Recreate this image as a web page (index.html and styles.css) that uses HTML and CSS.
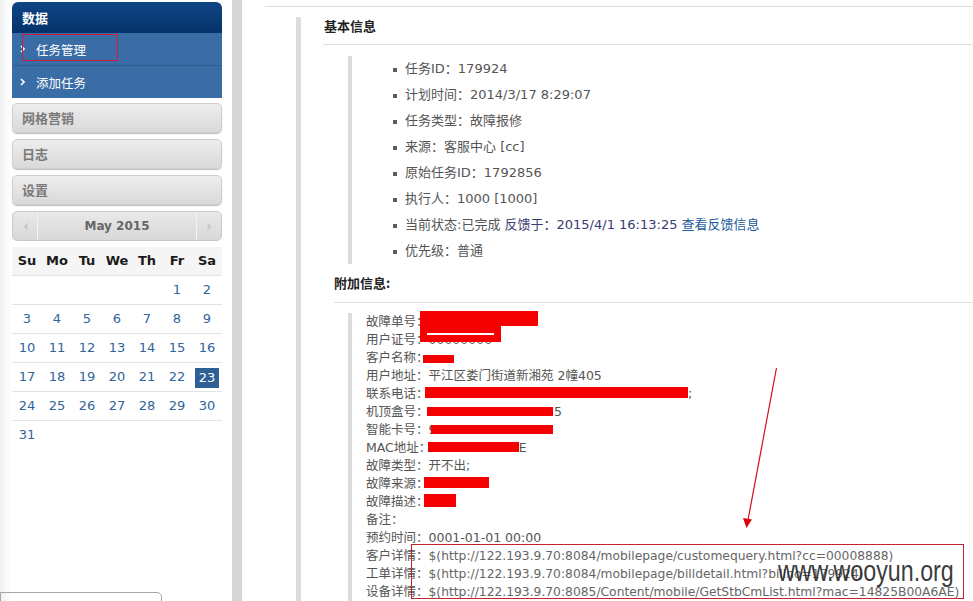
FILE: index.html
```html
<!DOCTYPE html>
<html lang="zh-CN">
<head>
<meta charset="utf-8">
<title>任务详情</title>
<link rel="stylesheet" href="styles.css">
</head>
<body>
<div class="page">
  <aside class="sidebar">
    <nav class="acc">
      <div class="acc-head">数据</div>
      <a class="acc-item"><svg class="chev" width="5" height="8" viewBox="0 0 5 8"><polyline points="1,1 4,4 1,7" fill="none" stroke="#fff" stroke-width="1.6"/></svg><span>任务管理</span><span class="annot-box"></span></a>
      <a class="acc-item"><svg class="chev" width="5" height="8" viewBox="0 0 5 8"><polyline points="1,1 4,4 1,7" fill="none" stroke="#fff" stroke-width="1.6"/></svg><span>添加任务</span></a>
    </nav>
    <div class="acc-btn first">网格营销</div>
    <div class="acc-btn">日志</div>
    <div class="acc-btn">设置</div>

    <div class="cal">
      <div class="cal-head">
        <span class="cal-nav prev"><svg width="5" height="9" viewBox="0 0 5 9"><polygon points="4.5,0 0.5,4.5 4.5,9" fill="#c9c9c9"/></svg></span>
        <span class="cal-title">May 2015</span>
        <span class="cal-nav next"><svg width="5" height="9" viewBox="0 0 5 9"><polygon points="0.5,0 4.5,4.5 0.5,9" fill="#c9c9c9"/></svg></span>
      </div>
      <table class="cal-grid">
        <thead>
          <tr><th>Su</th><th>Mo</th><th>Tu</th><th>We</th><th>Th</th><th>Fr</th><th>Sa</th></tr>
        </thead>
        <tbody>
          <tr><td></td><td></td><td></td><td></td><td></td><td>1</td><td>2</td></tr>
          <tr><td>3</td><td>4</td><td>5</td><td>6</td><td>7</td><td>8</td><td>9</td></tr>
          <tr><td>10</td><td>11</td><td>12</td><td>13</td><td>14</td><td>15</td><td>16</td></tr>
          <tr><td>17</td><td>18</td><td>19</td><td>20</td><td>21</td><td>22</td><td><span class="today">23</span></td></tr>
          <tr><td>24</td><td>25</td><td>26</td><td>27</td><td>28</td><td>29</td><td>30</td></tr>
          <tr class="last"><td>31</td><td></td><td></td><td></td><td></td><td></td><td></td></tr>
        </tbody>
      </table>
    </div>
    <div class="stub"></div>
  </aside>

  <div class="gutter"></div>

  <main class="main">
    <div class="topline"></div>
    <section class="detail">
      <h3 class="sec-title">基本信息</h3>
      <ul class="info-list">
        <li>任务ID：179924</li>
        <li>计划时间：2014/3/17 8:29:07</li>
        <li>任务类型：故障报修</li>
        <li>来源：客服中心 [cc]</li>
        <li>原始任务ID：1792856</li>
        <li>执行人：1000 [1000]</li>
        <li>当前状态:已完成 <span class="fb">反馈于：2015/4/1 16:13:25</span> <a class="link">查看反馈信息</a></li>
        <li>优先级：普通</li>
      </ul>

      <h4 class="sec-sub">附加信息:</h4>
      <div class="extra">
        <div class="row">故障单号：<span class="red r-order"></span></div>
        <div class="row">用户证号：<span class="red r-user"></span>00000000</div>
        <div class="row">客户名称：<span class="red r-name"></span></div>
        <div class="row">用户地址：平江区娄门街道新湘苑 2幢405</div>
        <div class="row">联系电话：<span class="red r-phone"></span>;</div>
        <div class="row">机顶盒号：<span class="red r-stb"></span><span class="tail">5</span></div>
        <div class="row">智能卡号：9<span class="red r-card"></span></div>
        <div class="row">MAC地址：<span class="red r-mac"></span>E</div>
        <div class="row">故障类型：开不出;</div>
        <div class="row">故障来源：<span class="red r-src"></span></div>
        <div class="row">故障描述：<span class="red r-desc"></span></div>
        <div class="row">备注：</div>
        <div class="row">预约时间：0001-01-01 00:00</div>
        <div class="row">客户详情：<span class="url">$(http://122.193.9.70:8084/mobilepage/customequery.html?cc=00008888)</span></div>
        <div class="row">工单详情：<span class="url">$(http://122.193.9.70:8084/mobilepage/billdetail.html?billno=179924)</span></div>
        <div class="row">设备详情：<span class="url">$(http://122.193.9.70:8085/Content/mobile/GetStbCmList.html?mac=14825B00A6AE)</span></div>

        <div class="url-box"></div>
        <svg class="arrow" width="40" height="165" viewBox="0 0 40 165">
          <line x1="36.5" y1="0" x2="8" y2="152" stroke="#d40f1c" stroke-width="1.2"/>
          <polygon points="6.5,160 3,150 12,151.5" fill="#e00010"/>
        </svg>
        <div class="wm">www.wooyun.org</div>
      </div>
    </section>
  </main>
</div>
</body>
</html>
```

FILE: styles.css
```css
html, body {
  margin: 0;
  padding: 0;
  height: 601px;
  overflow: hidden;
  background: #fff;
}

body {
  font-family: "DejaVu Sans", "Noto Sans CJK SC", sans-serif;
  color: #555;
}

.page {
  display: flex;
  height: 601px;
}

/* ---------- sidebar ---------- */
.sidebar {
  width: 232px;
  flex: none;
  box-sizing: border-box;
  padding: 2px 10px 0 12px;
  background: linear-gradient(to right, #f0f0f0 0, #fff 11px);
}

.acc-head {
  height: 31px;
  line-height: 31px;
  padding-left: 10px;
  border-radius: 6px 6px 0 0;
  background: linear-gradient(#0f4584, #05336b);
  color: #fff;
  font-family: "Noto Sans CJK SC", sans-serif;
  font-size: 13px;
  font-weight: bold;
}

.acc-item {
  position: relative;
  display: flex;
  align-items: center;
  height: 32px;
  padding-left: 8px;
  background: #3a6ca6;
  color: #fff;
  font-family: "Noto Sans CJK SC", sans-serif;
  font-size: 12.5px;
}

.acc-item + .acc-item {
  border-top: 1px solid #2f5e95;
}

.chev {
  flex: none;
  margin-right: 11px;
}

.annot-box {
  position: absolute;
  left: 10px;
  top: 1px;
  width: 96px;
  height: 27px;
  box-sizing: border-box;
  border: 1px solid #cc1b3d;
}

.acc-btn {
  margin-top: 6px;
  height: 30px;
  box-sizing: border-box;
  padding-left: 9px;
  line-height: 28px;
  border: 1px solid #cfcfcf;
  border-radius: 5px;
  background: linear-gradient(#ededed, #d9d9d9);
  box-shadow: 0 1px 1px #bcbcbc;
  color: #7a7a7a;
  font-family: "Noto Sans CJK SC", sans-serif;
  font-size: 13px;
  font-weight: bold;
}

.acc-btn.first {
  margin-top: 5px;
}

/* ---------- calendar ---------- */
.cal {
  margin-top: 6px;
}

.cal-head {
  display: flex;
  height: 30px;
  box-sizing: border-box;
  border: 1px solid #c9c9c9;
  border-radius: 5px;
  background: linear-gradient(#e9e9e9, #d8d8d8);
}

.cal-nav {
  width: 24px;
  display: flex;
  align-items: center;
  justify-content: center;
}

.cal-nav.prev {
  border-right: 1px solid #f3f3f3;
}

.cal-nav.next {
  border-left: 1px solid #f3f3f3;
}

.cal-title {
  flex: 1;
  text-align: center;
  line-height: 28px;
  font-size: 12px;
  font-weight: bold;
  color: #666;
}

.cal-grid {
  margin-top: 6px;
  width: 210px;
  table-layout: fixed;
  border-collapse: separate;
  border-spacing: 0;
  font-size: 13px;
}

.cal-grid th,
.cal-grid td {
  padding: 0;
  text-align: center;
  line-height: 28px;
  border-bottom: 1px solid #e3e3e3;
}

.cal-grid th {
  background: #f5f5f5;
  color: #1a1a1a;
  font-weight: bold;
}

.cal-grid td {
  color: #2f659b;
}

.cal-grid tr.last td {
  border-bottom: none;
}

.today {
  display: inline-block;
  width: 24px;
  height: 20px;
  line-height: 20px;
  background: #2d6097;
  color: #fff;
  vertical-align: middle;
}

.stub {
  margin: 143px 0 0 -12px;
  width: 162px;
  height: 30px;
  box-sizing: border-box;
  border: 1px solid #a5a5a5;
  border-radius: 0 5px 0 0;
}

/* ---------- gutter ---------- */
.gutter {
  width: 10px;
  flex: none;
  background: #d6d6d6;
}

/* ---------- main ---------- */
.main {
  flex: 1;
  min-width: 0;
  padding-left: 20px;
  display: flex;
  flex-direction: column;
}

.topline {
  flex: none;
  height: 1px;
  margin-top: 6px;
  background: linear-gradient(to right, #fff, #dcdcdc 6px);
}

.detail {
  flex: 1;
  margin: 10px 0 0 34px;
  padding-left: 22px;
  border-left: 5px solid #dcdcdc;
}

.sec-title {
  margin: 0;
  padding: 0 0 9px 1px;
  line-height: 18px;
  border-bottom: 1px solid #dedede;
  font-family: "Noto Sans CJK SC", sans-serif;
  font-size: 13px;
  font-weight: bold;
  color: #222;
}

.info-list {
  list-style: none;
  margin: 11px 0 0 25px;
  padding: 0 0 0 41px;
  border-left: 4px solid #dcdcdc;
  font-size: 13px;
  color: #555;
}

.info-list li {
  line-height: 26px;
  white-space: nowrap;
}

.info-list li::before {
  content: "";
  display: inline-block;
  width: 4px;
  height: 4px;
  margin-right: 8px;
  background: #5a5a5a;
  vertical-align: middle;
}

.fb {
  color: #3b3b72;
}

.link {
  color: #1d5c9b;
}

.sec-sub {
  margin: 10px 0 0 11px;
  padding-bottom: 10px;
  line-height: 18px;
  border-bottom: 1px solid #dedede;
  font-family: "Noto Sans CJK SC", sans-serif;
  font-size: 13px;
  font-weight: bold;
  color: #222;
}

.extra {
  position: relative;
  margin: 10px 0 0 25px;
  padding-left: 14px;
  border-left: 4px solid #dcdcdc;
  font-size: 12.5px;
  line-height: 18px;
  color: #555;
  min-height: 300px;
}

.row {
  height: 18px;
  white-space: nowrap;
}

.url {
  color: #666;
  font-size: 12.3px;
}

.red {
  display: inline-block;
  position: relative;
  z-index: 1;
  background: #f50000;
}

.r-order { width: 118px; height: 15px; margin-left: -8.5px; margin-top: -4px; vertical-align: 0; }
.r-user  { width: 81px;  height: 17px; margin-left: -8.5px; margin-right: -72.5px; margin-top: -9px; vertical-align: 2px; }
.r-user::after {
  content: "";
  position: absolute;
  left: 7px;
  top: 8px;
  width: 67px;
  height: 2px;
  background: #fff;
}
.r-name  { width: 31px;  height: 8px;  margin-left: -5.5px; vertical-align: -1px; }
.r-phone { width: 263px; height: 11px; margin-left: -3.5px; vertical-align: 0; }
.r-stb   { width: 126px; height: 9px;  margin-left: -1.5px; vertical-align: 0; }
.tail    { margin-left: 1px; }
.r-card  { width: 122px; height: 9px;  margin-left: -5.5px; vertical-align: 0; }
.r-mac   { width: 91px;  height: 10px; margin-left: -3.5px; vertical-align: 0; }
.r-src   { width: 65px;  height: 11px; margin-left: -4.5px; vertical-align: 0; }
.r-desc  { width: 32px;  height: 13px; margin-left: -4.5px; margin-top: -2px; vertical-align: -1px; }

.url-box {
  position: absolute;
  left: 59px;
  top: 231px;
  width: 553px;
  height: 55px;
  box-sizing: border-box;
  border: 1px solid #c4222c;
  z-index: 2;
}

.arrow {
  position: absolute;
  left: 388px;
  top: 55px;
  z-index: 2;
}

.wm {
  position: absolute;
  left: 426px;
  top: 243px;
  z-index: 3;
  font-family: "Liberation Sans", sans-serif;
  font-size: 30px;
  line-height: 30px;
  color: rgba(34, 34, 34, 0.9);
  transform: scaleX(0.775);
  transform-origin: left center;
  white-space: nowrap;
}
```
